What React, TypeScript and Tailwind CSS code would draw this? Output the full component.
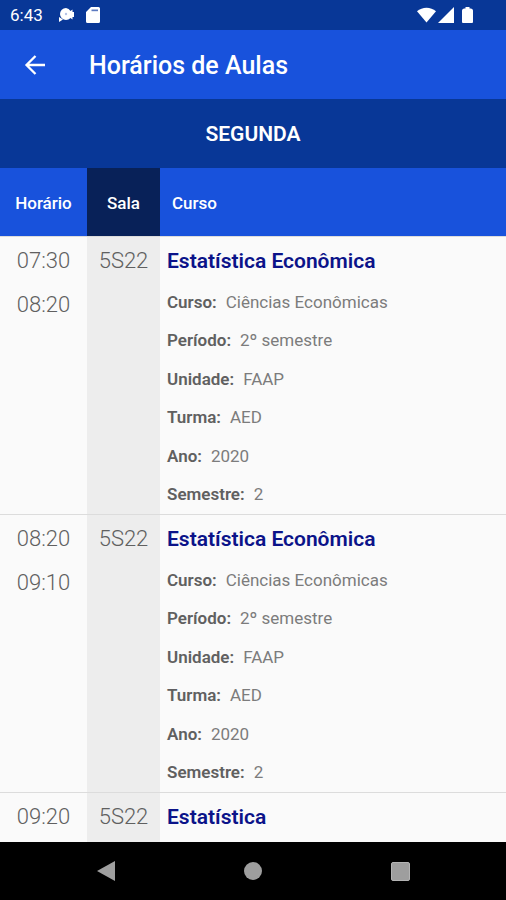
type Lesson = {
  start: string;
  end?: string;
  room: string;
  title: string;
  details?: [string, string][];
};

const details: [string, string][] = [
  ["Curso:", "Ciências Econômicas"],
  ["Período:", "2º semestre"],
  ["Unidade:", "FAAP"],
  ["Turma:", "AED"],
  ["Ano:", "2020"],
  ["Semestre:", "2"],
];

const lessons: Lesson[] = [
  { start: "07:30", end: "08:20", room: "5S22", title: "Estatística Econômica", details },
  { start: "08:20", end: "09:10", room: "5S22", title: "Estatística Econômica", details },
  { start: "09:20", room: "5S22", title: "Estatística" },
];

function StatusBar() {
  return (
    <div className="flex h-[30px] shrink-0 items-center bg-[#083797] pr-[33px] pl-[10px] text-white">
      <span className="text-[17px] leading-[30px]">6:43</span>
      <svg className="ml-[15px] h-4 w-4" viewBox="0 0 16 16" fill="currentColor" aria-hidden="true">
        <path d="M8 1a6 6 0 1 0 0 12 6 6 0 0 0 4.500-2l2 1.500V10H16V5h-1.500V2.500L12.500 4A6 6 0 0 0 8 1Z" />
        <path d="M1 10v5l4-2.500Z" />
        <circle cx="8" cy="7" r="1.200" fill="#b4c2e6" />
      </svg>
      <svg className="ml-3 h-4 w-[14px]" viewBox="0 0 14 16" fill="currentColor" aria-hidden="true">
        <path d="M5 0h7.500A1.500 1.500 0 0 1 14 1.500v13a1.500 1.500 0 0 1-1.500 1.500h-11A1.500 1.500 0 0 1 0 14.500V5Z" />
        <path d="M5.500 2.500H12v1.700H5.500z" fill="#5d7ac0" />
      </svg>
      <svg className="ml-auto h-4 w-[19px]" viewBox="0 0 20 16" fill="currentColor" aria-hidden="true">
        <path d="M0 4C5.500-1 14.500-1 20 4L10 16Z" />
      </svg>
      <svg className="ml-0.5 h-4 w-4" viewBox="0 0 16 16" fill="currentColor" aria-hidden="true">
        <path d="M16 0v16H0Z" />
      </svg>
      <svg className="ml-2 h-4 w-[11px]" viewBox="0 0 11 16" fill="currentColor" aria-hidden="true">
        <path d="M3.500 0h4v1.500H9q2 .5 2 2V15q0 1-1 1H1q-1 0-1-1V3.500q0-1.500 2-2h1.500Z" />
      </svg>
    </div>
  );
}

function LessonRow({ lesson }: { lesson: Lesson }) {
  return (
    <tr className="h-14 border-t border-[#dcdcdc] align-top text-[22px] leading-[44px] font-light text-[#606060]">
      <td className="pt-[2px] text-center">
        <div>{lesson.start}</div>
        {lesson.end && <div>{lesson.end}</div>}
      </td>
      <td className="bg-[#ededed] pt-[2px] text-center">{lesson.room}</td>
      <td className="pt-[2px] pl-[7px]">
        <h2 className="text-[21px] leading-[44px] font-semibold text-[#0b1389]">{lesson.title}</h2>
        {lesson.details && (
          <dl className="grid h-[231px] grid-rows-6 items-center text-[17px] leading-6">
            {lesson.details.map(([label, value]) => (
              <div key={label} className="flex gap-[9px]">
                <dt className="font-semibold text-[#606060]">{label}</dt>
                <dd className="font-normal text-[#7c7c7c]">{value}</dd>
              </div>
            ))}
          </dl>
        )}
      </td>
    </tr>
  );
}

export default function App() {
  return (
    <div className="flex h-screen flex-col overflow-hidden bg-[#fafafa] font-['Roboto',sans-serif]">
      <StatusBar />
      <header className="flex h-[69px] shrink-0 items-center bg-[#1852dc] pl-6 text-white">
        <button type="button" aria-label="Voltar" className="h-[22px] w-[22px]">
          <svg viewBox="0 0 22 22" className="h-full w-full" fill="none" stroke="currentColor" strokeWidth="2.300" aria-hidden="true">
            <path d="M21 11H3M11.500 2l-9 9 9 9" />
          </svg>
        </button>
        <h1 className="ml-[43px] pt-0.5 text-[25px] font-medium">Horários de Aulas</h1>
      </header>
      <div className="flex h-[69px] shrink-0 items-center justify-center bg-[#083797] pt-0.5 text-[21px] font-semibold text-white">
        SEGUNDA
      </div>
      <main className="min-h-0 flex-1 overflow-hidden">
        <table className="w-full table-fixed border-collapse">
          <colgroup>
            <col className="w-[87px]" />
            <col className="w-[73px]" />
            <col />
          </colgroup>
          <thead>
            <tr className="h-[68px] bg-[#1852dc] text-[17px] text-white">
              <th scope="col" className="pt-[3px] text-center font-medium">Horário</th>
              <th scope="col" className="bg-[#082158] pt-[3px] text-center font-medium">Sala</th>
              <th scope="col" className="pt-[3px] pl-3 text-left font-medium">Curso</th>
            </tr>
          </thead>
          <tbody>
            {lessons.map((lesson) => (
              <LessonRow key={lesson.start} lesson={lesson} />
            ))}
          </tbody>
        </table>
      </main>
      <nav className="flex h-[58px] shrink-0 items-center justify-around bg-black px-8 text-[#9e9e9e]">
        <button type="button" aria-label="Voltar à tela anterior" className="h-5 w-5">
          <svg viewBox="0 0 20 20" className="h-full w-full" fill="currentColor" aria-hidden="true">
            <path d="M1 10 19 0v20Z" />
          </svg>
        </button>
        <button type="button" aria-label="Início" className="h-[18px] w-[18px] rounded-full bg-[#9e9e9e]" />
        <button type="button" aria-label="Recentes" className="h-[19px] w-[19px] rounded-xs border border-[#b4b4b4] bg-[#9e9e9e]" />
      </nav>
    </div>
  );
}
